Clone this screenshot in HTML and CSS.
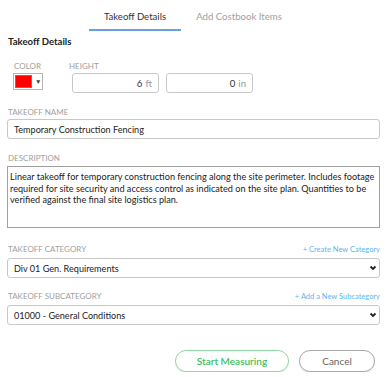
FILE: index.html
```html
<!DOCTYPE html>
<html lang="en">
<head>
    <meta charset="UTF-8">
    <meta name="viewport" content="width=device-width, initial-scale=1.0">
    <title>Takeoff Details</title>
    <link rel="stylesheet" href="styles.css">
</head>
<body>
    <nav class="tabs">
        <div class="tab active">Takeoff Details</div>
        <div class="tab">Add Costbook Items</div>
    </nav>

    <div class="panel">
        <h2 class="heading">Takeoff Details</h2>

        <div class="size-row">
            <div class="group color-group">
                <label class="label">Color</label>
                <div class="swatch">
                    <span class="swatch-fill"></span>
                    <span class="swatch-arrow">&#9660;</span>
                </div>
            </div>
            <div class="group height-group">
                <label class="label">Height</label>
                <div class="height-fields">
                    <div class="unit-field"><span class="num">6</span><span class="unit">ft</span></div>
                    <div class="unit-field"><span class="num">0</span><span class="unit">in</span></div>
                </div>
            </div>
        </div>

        <div class="row">
            <label class="label">Takeoff Name</label>
            <input class="text-input" type="text" value="Temporary Construction Fencing">
        </div>

        <div class="row">
            <label class="label">Description</label>
            <textarea class="text-area">Linear takeoff for temporary construction fencing along the site perimeter. Includes footage required for site security and access control as indicated on the site plan. Quantities to be verified against the final site logistics plan.</textarea>
        </div>

        <div class="row row-category">
            <div class="label-line">
                <label class="label">Takeoff Category</label>
                <a class="add-link" href="#">+ Create New Category</a>
            </div>
            <div class="select-wrap">
                <select class="select">
                    <option>Div 01 Gen. Requirements</option>
                </select>
                <svg class="chevron" width="8" height="6" viewBox="0 0 8 6"><path d="M1.5 1.5 L4 4 L6.5 1.5" fill="none" stroke="#222" stroke-width="1.8"/></svg>
            </div>
        </div>

        <div class="row row-sub">
            <div class="label-line">
                <label class="label">Takeoff Subcategory</label>
                <a class="add-link" href="#">+ Add a New Subcategory</a>
            </div>
            <div class="select-wrap">
                <select class="select">
                    <option>01000 - General Conditions</option>
                </select>
                <svg class="chevron" width="8" height="6" viewBox="0 0 8 6"><path d="M1.5 1.5 L4 4 L6.5 1.5" fill="none" stroke="#222" stroke-width="1.8"/></svg>
            </div>
        </div>

        <div class="actions">
            <button class="btn btn-start">Start Measuring</button>
            <button class="btn btn-cancel">Cancel</button>
        </div>
    </div>
</body>
</html>
```

FILE: styles.css
```css
body {
    font-family: Lato, "Open Sans", sans-serif;
    margin: 0;
    padding: 0;
    background-color: #fff;
    color: #333;
}

.tabs {
    display: flex;
    padding-left: 89px;
    gap: 12px;
    height: 31px;
}

.tab {
    width: 92px;
    text-align: center;
    font-size: 9.6px;
    line-height: 14px;
    padding-top: 10px;
    box-sizing: border-box;
    color: #a0a0a0;
    white-space: nowrap;
}

.tab.active {
    color: #333;
    border-bottom: 2px solid #6b9fe0;
}

.panel {
    padding: 0 7px;
}

.heading {
    margin: 4px 0 0 1px;
    font-size: 9.6px;
    line-height: 14px;
    font-weight: bold;
    color: #222;
}

.label {
    display: block;
    font-size: 8px;
    line-height: 10px;
    text-transform: uppercase;
    color: #a0a0a0;
    padding-left: 1px;
}

.size-row {
    display: flex;
    margin-top: 12px;
}

.color-group {
    margin-left: 6px;
    width: 55px;
}

.swatch {
    margin-top: 2px;
    width: 30px;
    height: 17px;
    box-sizing: border-box;
    border: 1px solid #b5b5b5;
    display: flex;
    align-items: center;
    padding-left: 1px;
}

.swatch-fill {
    width: 17px;
    height: 13px;
    background-color: #f00;
    border: 1px solid #777;
    box-sizing: border-box;
}

.swatch-arrow {
    font-size: 6.5px;
    color: #444;
    margin-left: 3px;
}

.height-fields {
    display: flex;
    gap: 7px;
    margin-top: 2px;
    margin-left: 4px;
}

.unit-field {
    width: 87px;
    height: 20px;
    box-sizing: border-box;
    border: 1px solid #c8c8c8;
    border-radius: 3px;
    display: flex;
    justify-content: flex-end;
    align-items: center;
    padding-right: 6px;
    gap: 3px;
    font-size: 9.6px;
}

.unit-field .num {
    color: #333;
}

.unit-field .unit {
    color: #999;
}

.row {
    margin-top: 14px;
}

.row-category {
    margin-top: 16px;
}

.row-sub {
    margin-top: 13px;
}

.text-input, .select {
    display: block;
    width: 100%;
    height: 20px;
    box-sizing: border-box;
    margin-top: 2px;
    border: 1px solid #c8c8c8;
    border-radius: 3px;
    padding: 0 6px;
    font-family: inherit;
    font-size: 9.1px;
    color: #222;
    background-color: #fff;
}

.text-area {
    display: block;
    width: 100%;
    height: 62px;
    box-sizing: border-box;
    margin-top: 3px;
    border: 1px solid #a0a0a0;
    padding: 4px 2px 2px;
    font-family: inherit;
    font-size: 9.15px;
    line-height: 11.5px;
    color: #222;
    resize: none;
}

.label-line {
    display: flex;
    justify-content: space-between;
    align-items: baseline;
}

.add-link {
    font-size: 7.5px;
    line-height: 10px;
    color: #5bb6f2;
    text-decoration: none;
}

.select-wrap {
    position: relative;
    margin-top: 3px;
}

.select {
    margin-top: 0;
    appearance: none;
    -webkit-appearance: none;
}

.chevron {
    position: absolute;
    right: 3px;
    top: 7px;
}

.actions {
    display: flex;
    justify-content: flex-end;
    gap: 10px;
    margin-top: 25px;
    padding-right: 5px;
}

.btn {
    height: 22px;
    border-radius: 11px;
    background-color: #fff;
    font-family: inherit;
    font-size: 10px;
    box-sizing: border-box;
    cursor: pointer;
}

.btn-start {
    width: 114px;
    border: 1px solid #8fd9a4;
    color: #3ec064;
    font-weight: 600;
    box-shadow: 0 1px 1px rgba(0, 0, 0, 0.08);
}

.btn-cancel {
    width: 76px;
    border: 1px solid #a8a8a8;
    color: #666;
    box-shadow: 0 1px 1px rgba(0, 0, 0, 0.1);
}
```
